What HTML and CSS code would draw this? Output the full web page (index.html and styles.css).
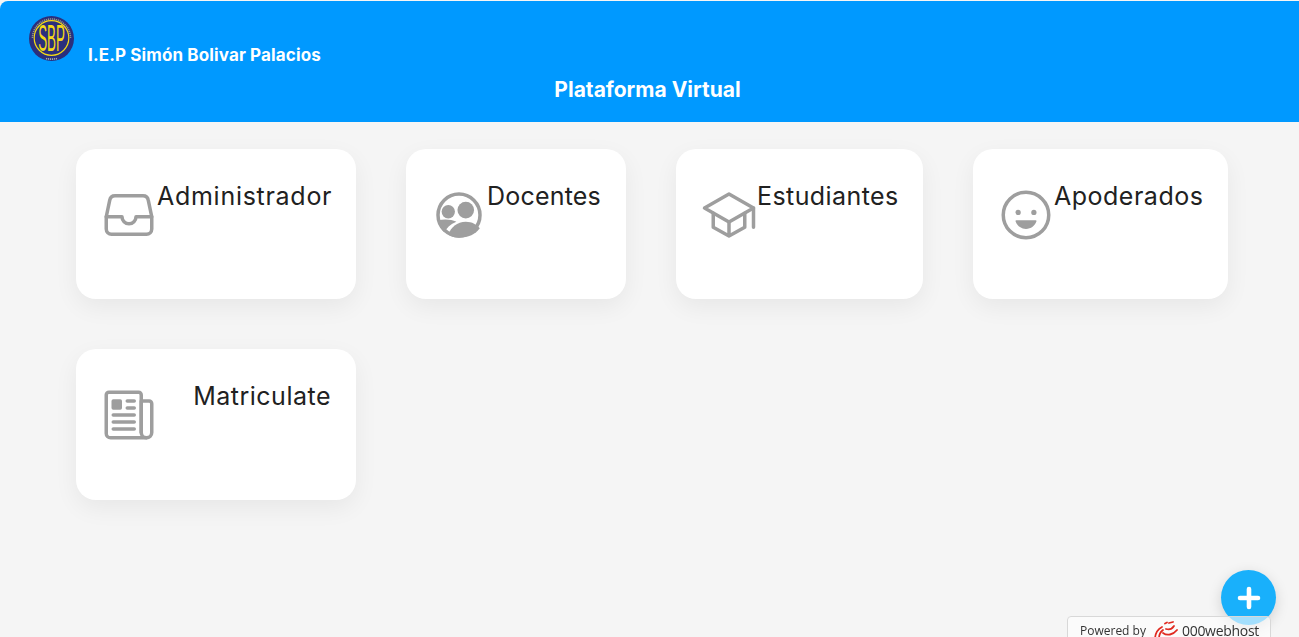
FILE: index.html
```html
<!DOCTYPE html>
<html lang="es">
<head>
<meta charset="utf-8">
<title>Plataforma Virtual</title>
<link rel="stylesheet" href="styles.css">
</head>
<body>
<header class="header">
  <div class="brand">
    <svg class="logo" viewBox="0 0 45 45" aria-hidden="true">
      <circle cx="22.5" cy="22.5" r="22.5" fill="#2b2f7c"/>
      <path class="logo-arc" d="M3.5 22a19 19 0 0 1 38 0"/>
      <path class="logo-arc logo-arc-low" d="M17 42.4a20 20 0 0 0 11 0"/>
      <circle class="logo-ring" cx="22.5" cy="22" r="17.3"/>
      <g transform="translate(22.5 35) scale(.74 2.05)"><text class="logo-text" text-anchor="middle">SBP</text></g>
    </svg>
    <span class="school">I.E.P Simón Bolivar Palacios</span>
  </div>
  <h1 class="title">Plataforma Virtual</h1>
</header>

<main class="cards">
  <a class="card card-admin" href="#">
    <svg class="icon" viewBox="0 0 512 512" aria-hidden="true"><path d="M384 80H128c-26 0-43 14-48 40L48 272v112a48.14 48.14 0 0048 48h320a48.14 48.14 0 0048-48V272l-32-152c-5-27-23-40-48-40z"/><path d="M48 272h144M320 272h144M192 272a64 64 0 00128 0"/></svg>
    <span class="label">Administrador</span>
  </a>
  <a class="card card-docentes" href="#">
    <svg class="icon" viewBox="0 0 512 512" aria-hidden="true">
      <circle cx="256" cy="256" r="192"/>
      <circle class="solid" cx="158" cy="226" r="61"/>
      <circle class="solid" cx="318" cy="211" r="76"/>
      <path class="solid" d="M66 305C120 292 185 295 232 318C178 340 142 375 122 416C92 388 72 350 66 305z"/>
      <path class="solid" d="M160 436C178 370 240 318 318 318C376 318 420 345 446 378C410 432 340 464 256 464C220 464 188 454 160 436z"/>
    </svg>
    <span class="label">Docentes</span>
  </a>
  <a class="card card-estudiantes" href="#">
    <svg class="icon" viewBox="0 0 512 512" aria-hidden="true"><path d="M32 192L256 64l224 128-224 128L32 192z"/><path d="M112 240v128l144 80 144-80V240M480 368V192M256 320v128"/></svg>
    <span class="label">Estudiantes</span>
  </a>
  <a class="card card-apoderados" href="#">
    <svg class="icon" viewBox="0 0 512 512" aria-hidden="true"><circle cx="256" cy="256" r="208"/><circle class="solid" cx="184" cy="232" r="24"/><circle class="solid" cx="328" cy="232" r="24"/><path class="solid" d="M256.05 384c-45.42 0-83.62-29.53-95.71-69.83a8 8 0 017.82-10.17h175.69a8 8 0 017.82 10.17c-11.99 40.3-50.2 69.83-95.62 69.83z"/></svg>
    <span class="label">Apoderados</span>
  </a>
  <a class="card card-matricula" href="#">
    <svg class="icon" viewBox="0 0 512 512" aria-hidden="true"><path d="M368 415.86V72a24.07 24.07 0 00-24-24H72a24.07 24.07 0 00-24 24v352a40.12 40.12 0 0040 40h328"/><path d="M416 464h0a48 48 0 01-48-48V128h72a24 24 0 0124 24v264a48 48 0 01-48 48z"/><path d="M240 128h64M240 192h64M112 256h192M112 320h192M112 384h192"/><path class="solid" d="M176 208h-64a16 16 0 01-16-16v-64a16 16 0 0116-16h64a16 16 0 0116 16v64a16 16 0 01-16 16z"/></svg>
    <span class="label">Matriculate</span>
  </a>
</main>

<button class="fab" type="button" aria-label="Agregar">
  <svg class="fab-plus" viewBox="0 0 24 24" aria-hidden="true"><path d="M12 3v18M3 12h18"/></svg>
</button>

<div class="powered">
  <span class="powered-by">Powered by</span>
  <svg class="swirl" viewBox="0 0 24 18" aria-hidden="true">
    <path d="M1 17C1.500 12 4 8 8 6"/>
    <path d="M5 17C5 14 6.500 11 9 9"/>
    <path d="M9 12C13 15 19 14 23 9"/>
    <path d="M11 2.500L13 1.500"/>
    <path d="M15 2L19 1"/>
    <path d="M12 8C15 9 18 8 20 5"/>
  </svg>
  <span class="powered-name">000webhost</span>
</div>
</body>
</html>
```
FILE: styles.css
```css
* { box-sizing: border-box; }

html, body { height: 100%; }

body {
  margin: 0;
  padding-top: 1px;
  background: #f5f5f5;
  overflow: hidden;
  font-family: Inter, "Liberation Sans", sans-serif;
  color: #212121;
}

.header {
  height: 121px;
  padding: 15px 29px 0;
  background: #0099ff;
  border-top-left-radius: 8px;
  color: #fff;
}

.brand {
  display: flex;
  align-items: flex-start;
  height: 61px;
}

.logo {
  width: 45px;
  height: 45px;
  flex: none;
}

.logo-arc {
  fill: none;
  stroke: #b9b98a;
  stroke-width: 1.6;
  stroke-dasharray: 1.2 .8;
  opacity: .75;
}

.logo-arc-low {
  stroke: #d8d8b0;
}

.logo-ring {
  fill: #2b2f7c;
  stroke: #f4d916;
  stroke-width: 1.2;
}

.logo-text {
  font-family: "Liberation Sans", sans-serif;
  font-size: 18px;
  fill: #f4d916;
}

.school {
  margin: 29px 0 0 14px;
  font-size: 17px;
  line-height: 20px;
  font-weight: 700;
  letter-spacing: .13px;
}

.title {
  margin: 0;
  padding-right: 4px;
  text-align: center;
  font-size: 21px;
  line-height: 26px;
  font-weight: 700;
}

.cards {
  display: flex;
  flex-wrap: wrap;
  gap: 50px;
  padding: 27px 0 0 76px;
}

.card {
  display: flex;
  align-items: flex-start;
  justify-content: space-between;
  height: 150px;
  padding: 0 25px;
  background: #fff;
  border-radius: 20px;
  box-shadow: 0 8px 25px rgba(0, 0, 0, .06);
  color: inherit;
  text-decoration: none;
}

.card-admin { width: 280px; }
.card-docentes { width: 220px; }
.card-estudiantes { width: 247px; }
.card-apoderados { width: 255px; }
.card-matricula { width: 280px; height: 151px; }

.icon {
  width: 56px;
  height: 56px;
  flex: none;
  margin-top: 38px;
  fill: none;
  stroke: #9e9e9e;
  stroke-width: 32;
  stroke-linecap: round;
  stroke-linejoin: round;
}

.icon .solid {
  fill: #9e9e9e;
  stroke: none;
}

.label {
  margin-top: 29px;
  font-size: 25px;
  line-height: 36px;
  letter-spacing: .5px;
  white-space: nowrap;
}

.card-admin .label { letter-spacing: .72px; }
.card-docentes .label { letter-spacing: .2px; }
.card-estudiantes .label { letter-spacing: .42px; }

.fab {
  position: fixed;
  right: 23px;
  bottom: 12px;
  display: flex;
  align-items: center;
  justify-content: center;
  width: 55px;
  height: 55px;
  padding: 0;
  border: 0;
  border-radius: 50%;
  background: #19b0fb;
  box-shadow: 0 4px 14px rgba(0, 0, 0, .15);
}

.fab-plus {
  width: 24px;
  height: 24px;
  fill: none;
  stroke: #fff;
  stroke-width: 4.6;
  stroke-linecap: round;
}

.powered {
  position: fixed;
  right: 28px;
  top: 616px;
  display: flex;
  align-items: center;
  width: 204px;
  height: 30px;
  padding: 0 0 2px 12px;
  background: rgba(255, 255, 255, .6);
  border: 1px solid #d8d8d8;
  border-radius: 4px;
  font-family: "Open Sans", sans-serif;
  font-size: 12px;
  color: #333;
}

.powered-by { width: 74px; flex: none; }

.swirl {
  width: 24px;
  height: 18px;
  flex: none;
  margin-right: 4px;
  fill: none;
  stroke: #e02a20;
  stroke-width: 1.8;
  stroke-linecap: round;
}

.powered-name {
  font-size: 14px;
  letter-spacing: -.3px;
}
```
